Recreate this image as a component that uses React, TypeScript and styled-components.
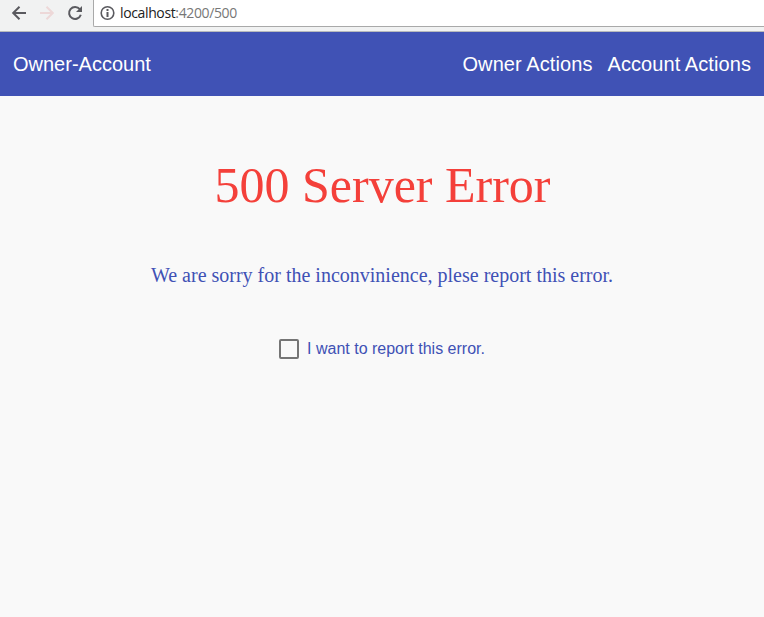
import React from "react";
import styled, { createGlobalStyle } from "styled-components";

const GlobalStyle = createGlobalStyle`
  * { box-sizing: border-box; }
  html, body { margin: 0; padding: 0; background: #f9f9f9; overflow: hidden; }
`;

const Page = styled.div`
  display: flex;
  flex-direction: column;
  height: 100vh;
  background: #f9f9f9;
`;

const BrowserBar = styled.div`
  display: flex;
  align-items: flex-start;
  height: 32px;
  flex: none;
  background: #f1f2f2;
  border-bottom: 1px solid #b8babc;
`;

const NavButtons = styled.div`
  display: flex;
  gap: 12px;
  width: 93px;
  flex: none;
  padding: 5px 0 0 11px;
`;

const NavIcon = styled.svg`
  width: 16px;
  height: 16px;
  flex: none;
  display: block;
`;

const AddressBar = styled.div`
  display: flex;
  align-items: center;
  gap: 4px;
  flex: 1;
  height: 27px;
  padding: 0 0 1px 6px;
  background: #fff;
  border: solid #a9a9a9;
  border-width: 0 0 1px 1px;
  border-bottom-left-radius: 2px;
`;

const Url = styled.span`
  font: 14px/18px "Open Sans", "Noto Sans", sans-serif;
  letter-spacing: -0.37px;
  color: #777;
  white-space: nowrap;
`;

const Host = styled.span`
  color: #222;
`;

const Toolbar = styled.header`
  display: flex;
  align-items: center;
  justify-content: space-between;
  height: 64px;
  flex: none;
  padding: 0 13px;
  background: #4052b5;
  color: #fff;
  font: 20px/32px "Liberation Sans", Arial, sans-serif;
`;

const Menu = styled.nav`
  display: flex;
  gap: 15px;
  letter-spacing: 0.08px;
`;

const Content = styled.main`
  display: flex;
  flex-direction: column;
  align-items: center;
`;

const Title = styled.h1`
  margin: 60px 0 0;
  padding-left: 1px;
  font: 400 50px/58px "Liberation Serif", "Times New Roman", serif;
  color: #f4403a;
  white-space: nowrap;
`;

const Message = styled.p`
  margin: 49px 0 0;
  font: 20px/24px "Liberation Serif", "Times New Roman", serif;
  color: #3f51b5;
  white-space: nowrap;
`;

const CheckRow = styled.div`
  display: flex;
  align-items: center;
  gap: 8px;
  margin-top: 50px;
  font: 16px/24px "Liberation Sans", Arial, sans-serif;
  color: #3f51b5;
`;

const CheckBox = styled.span`
  width: 20px;
  height: 20px;
  border: 2px solid #757575;
  border-radius: 2px;
`;

export default function App() {
  return (
    <Page>
      <GlobalStyle />
      <BrowserBar>
        <NavButtons>
          <NavIcon viewBox="0 0 16 16" fill="none" stroke="#5a5a5f" strokeWidth="2">
            <path d="M15 8H2.5M8.5 1.7L2.2 8l6.3 6.3" />
          </NavIcon>
          <NavIcon viewBox="0 0 16 16" fill="none" stroke="#edd8d8" strokeWidth="2">
            <path d="M1 8h12.5M7.5 1.7L13.8 8l-6.3 6.3" />
          </NavIcon>
          <NavIcon viewBox="0 0 16 16">
            <path d="M12.8 4.2A6 6 0 1 0 13.8 9.8" fill="none" stroke="#5a5a5f" strokeWidth="2" />
            <path d="M15 1v6H9z" fill="#5a5a5f" />
          </NavIcon>
        </NavButtons>
        <AddressBar>
          <NavIcon viewBox="0 0 16 16">
            <circle cx="7.5" cy="8" r="6.3" fill="none" stroke="#5a5a5f" strokeWidth="1.6" />
            <path d="M6.5 7h2v5h-2zM6.5 4h2v2h-2z" fill="#5a5a5f" />
          </NavIcon>
          <Url><Host>localhost</Host>:4200/500</Url>
        </AddressBar>
      </BrowserBar>
      <Toolbar>
        <span>Owner-Account</span>
        <Menu>
          <span>Owner Actions</span>
          <span>Account Actions</span>
        </Menu>
      </Toolbar>
      <Content>
        <Title>500 Server Error</Title>
        <Message>We are sorry for the inconvinience, plese report this error.</Message>
        <CheckRow>
          <CheckBox role="checkbox" aria-checked="false" />
          <span>I want to report this error.</span>
        </CheckRow>
      </Content>
    </Page>
  );
}
